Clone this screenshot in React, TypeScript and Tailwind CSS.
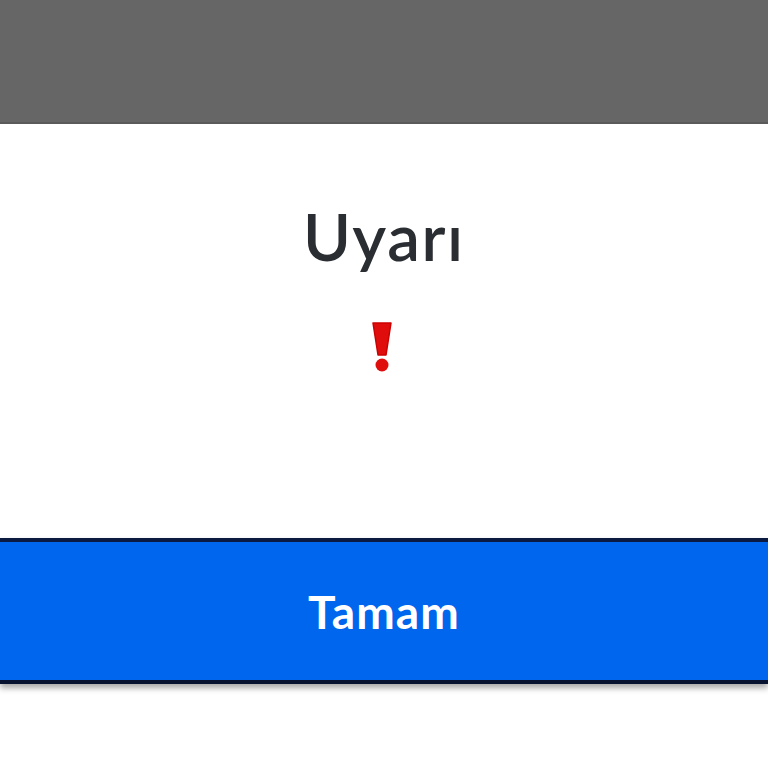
export default function App() {
  return (
    <div className="flex h-[768px] w-[768px] flex-col bg-white" style={{ fontFamily: "Lato, 'Noto Sans', sans-serif" }}>
      <div className="h-[124px] bg-[#666666] border-b-2 border-[#5a5a5a]" />
      <div className="flex h-[414px] flex-col items-center">
        <h1 className="mt-[80px] text-[65px] font-semibold leading-none tracking-wide text-[#2a2d31]">Uyarı</h1>
        <svg className="mt-[52px] mr-[4px]" width="22" height="52" viewBox="0 0 22 52">
          <path d="M2 2 H20 L15 34 H7 Z" fill="#e00d0d" stroke="#c00" strokeWidth="1.5" strokeLinejoin="round" />
          <circle cx="11" cy="44" r="6.5" fill="#e00d0d" />
        </svg>
      </div>
      <button className="flex h-[146px] w-full items-center justify-center border-y-[4px] border-t-[#0a1a40] border-b-[#071230] bg-[#0066ee] shadow-[0_4px_6px_rgba(0,0,0,0.35)]">
        <span className="text-[46px] font-bold tracking-wide text-white">Tamam</span>
      </button>
    </div>
  );
}
